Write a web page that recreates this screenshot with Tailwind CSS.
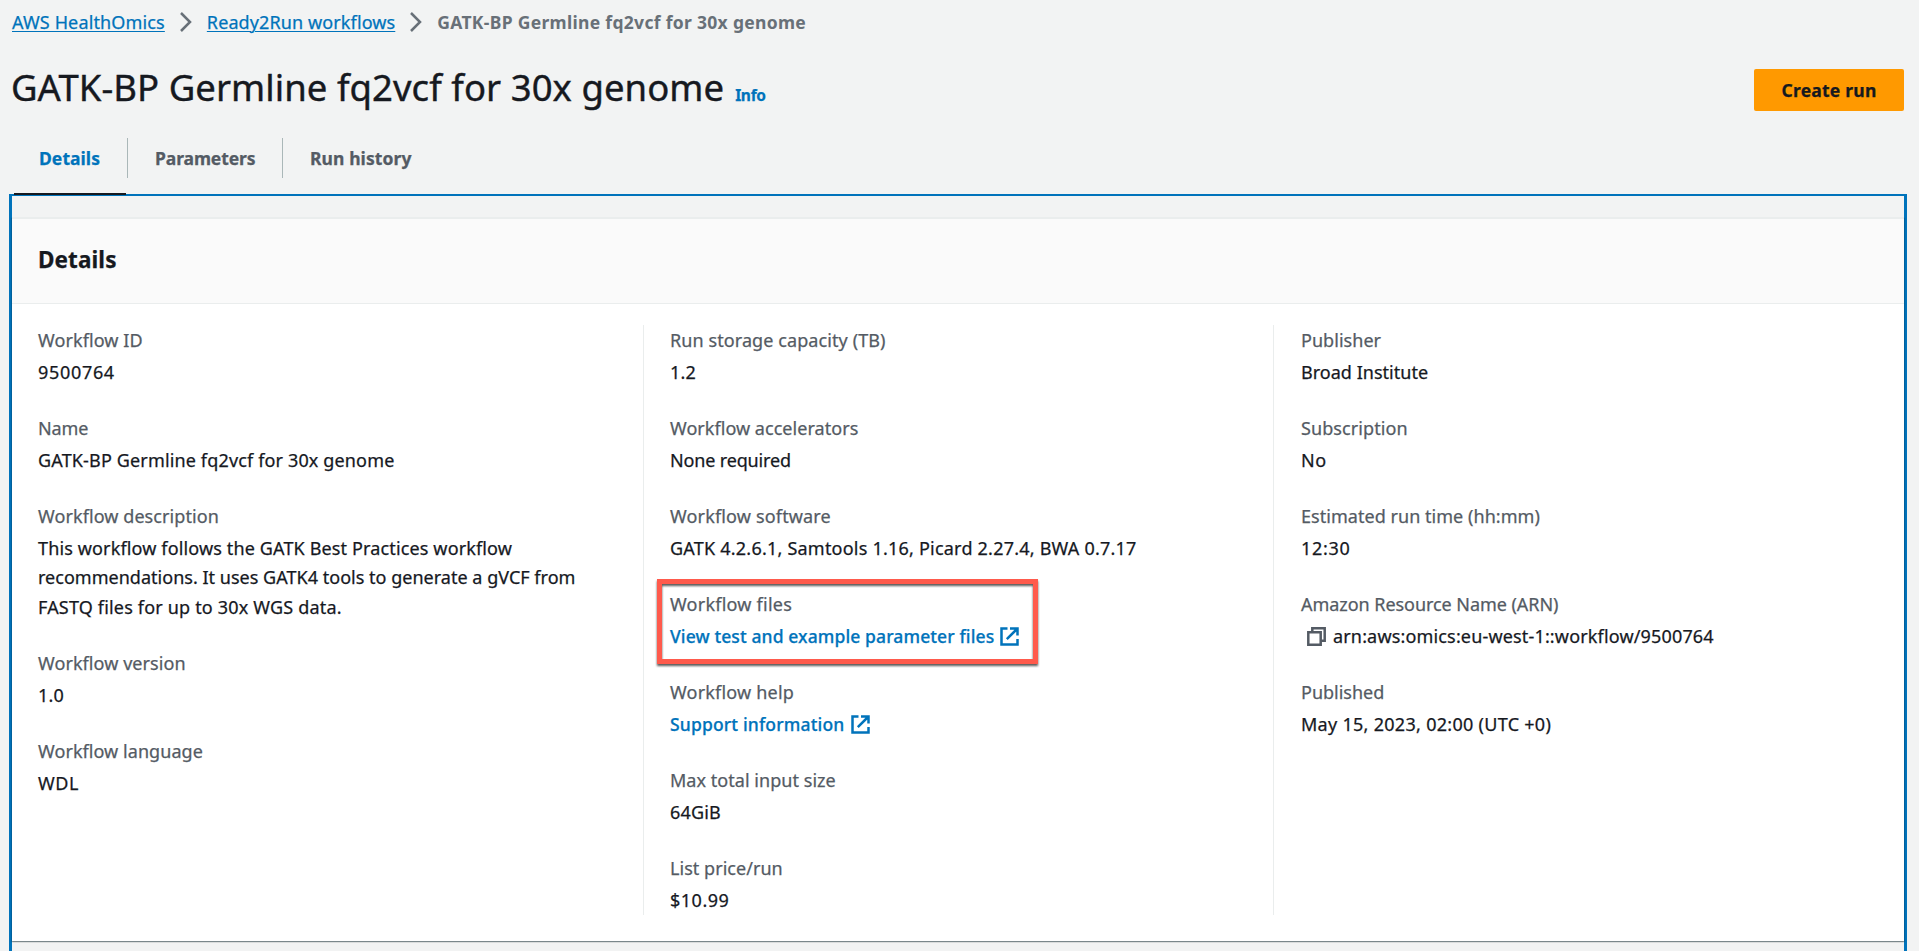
<!DOCTYPE html>
<html lang="en">
<head>
<meta charset="utf-8">
<title>AWS HealthOmics</title>
<script src="https://cdn.jsdelivr.net/npm/@tailwindcss/browser@4"></script>
</head>
<body class="flex h-[951px] flex-col overflow-hidden bg-[#f2f3f3] font-['Noto_Sans','Open_Sans',sans-serif] text-[18px] text-[#16191f] [-webkit-text-stroke:0.25px]">
<svg class="hidden">
  <symbol id="external" viewBox="0 0 19 19"><path d="M7.5 1.5H1.5V17.5H17.5V12M10 1.5H17.5V8.5M17 2L6.8 12.2" fill="none" stroke="currentColor" stroke-width="2.5"/></symbol>
  <symbol id="chevron" viewBox="0 0 12 20"><path d="M1 1L10 10L1 19" fill="none" stroke="currentColor" stroke-width="2.5"/></symbol>
</svg>

<nav class="mt-2 flex h-7 items-center pl-3 leading-7 whitespace-nowrap">
  <a class="text-[#0073bb] underline decoration-1 underline-offset-2 tracking-[0.14px]">AWS HealthOmics</a>
  <svg class="ml-[15px] mr-[15px] h-5 w-3 text-[#687078]"><use href="#chevron"/></svg>
  <a class="text-[#0073bb] underline decoration-1 underline-offset-2 tracking-[0.11px]">Ready2Run workflows</a>
  <svg class="ml-[15px] mr-[15px] h-5 w-3 text-[#687078]"><use href="#chevron"/></svg>
  <span class="text-[17.5px] font-bold tracking-[0.31px] text-[#687078] [-webkit-text-stroke:0px]">GATK-BP Germline fq2vcf for 30x genome</span>
</nav>

<header class="mt-[26px] flex h-[76px] items-start justify-between pr-[15px] pl-[11px]">
  <div class="flex items-baseline gap-[11px] pt-px">
    <h1 class="text-[36.5px] leading-[48px] tracking-[0.05px] [-webkit-text-stroke:0.4px]">GATK-BP Germline fq2vcf for 30x genome</h1>
    <a class="text-[15.5px] font-bold tracking-[-0.3px] text-[#0073bb]">Info</a>
  </div>
  <button class="mt-[7px] h-[42px] w-[150px] rounded-xs bg-[#ff9900] text-[17.5px] font-bold tracking-[0.22px]">Create run</button>
</header>

<div class="flex h-14 pl-[14px] text-[17.5px] leading-10 font-bold text-[#545b64]">
  <div class="relative w-[113px] pl-[25px] tracking-[0.06px] text-[#0073bb]">Details<span class="absolute -bottom-px left-0 h-[2px] w-[112px] bg-[#16191f]"></span></div>
  <div class="h-10 w-[155px] border-l border-[#aab7b8] pl-[27px] tracking-[-0.1px]">Parameters</div>
  <div class="h-10 border-l border-[#aab7b8] pl-[27px] tracking-[0.09px]">Run history</div>
</div>

<main class="mr-3 ml-[9px] flex-1 border-x-3 border-t-2 border-[#0073bb] pt-[21px]">
  <section class="h-[724px] border-t-2 border-[#eaeded] bg-white shadow-[0_1px_1px_0_rgba(0,28,36,0.3),1px_1px_1px_0_rgba(0,28,36,0.15),-1px_1px_1px_0_rgba(0,28,36,0.15)]">
    <h2 class="h-[85px] border-b border-[#eaeded] bg-[#fafafa] pl-[26px] text-[22.5px] leading-[81px] font-bold tracking-[0.1px]">Details</h2>
    <div class="mt-[21px] flex h-[590px] leading-[29.33px] whitespace-nowrap">
      <dl class="flex w-[631px] flex-col gap-[26.67px] pt-px pl-[26px]">
        <div class="flex flex-col gap-[2.67px]"><dt class="tracking-[0.09px] text-[#545b64]">Workflow ID</dt><dd class="tracking-[0.68px]">9500764</dd></div>
        <div class="flex flex-col gap-[2.67px]"><dt class="tracking-[-0.09px] text-[#545b64]">Name</dt><dd class="tracking-[0.15px]">GATK-BP Germline fq2vcf for 30x genome</dd></div>
        <div class="flex flex-col gap-[2.67px]"><dt class="tracking-[0.08px] text-[#545b64]">Workflow description</dt><dd><span class="tracking-[0.14px]">This workflow follows the GATK Best Practices workflow</span><br><span class="tracking-[0.02px]">recommendations. It uses GATK4 tools to generate a gVCF from</span><br><span class="tracking-[0.18px]">FASTQ files for up to 30x WGS data.</span></dd></div>
        <div class="flex flex-col gap-[2.67px]"><dt class="tracking-[0.07px] text-[#545b64]">Workflow version</dt><dd class="tracking-[0.19px]">1.0</dd></div>
        <div class="flex flex-col gap-[2.67px]"><dt class="tracking-[0.06px] text-[#545b64]">Workflow language</dt><dd class="tracking-[0.57px]">WDL</dd></div>
      </dl>
      <dl class="flex w-[630px] flex-col gap-[26.67px] border-l border-[#eaeded] pt-px pl-[26px]">
        <div class="flex flex-col gap-[2.67px]"><dt class="tracking-[0.09px] text-[#545b64]">Run storage capacity (TB)</dt><dd class="tracking-[0.19px]">1.2</dd></div>
        <div class="flex flex-col gap-[2.67px]"><dt class="tracking-[0.04px] text-[#545b64]">Workflow accelerators</dt><dd class="tracking-[-0.15px]">None required</dd></div>
        <div class="flex flex-col gap-[2.67px]"><dt class="tracking-[0.16px] text-[#545b64]">Workflow software</dt><dd class="tracking-[0.22px]">GATK 4.2.6.1, Samtools 1.16, Picard 2.27.4, BWA 0.7.17</dd></div>
        <div class="relative flex flex-col gap-[2.67px]">
          <dt class="tracking-[0.23px] text-[#545b64]">Workflow files</dt>
          <dd class="flex items-center gap-[6px] text-[17.5px] font-medium tracking-[0.11px] text-[#0073bb]">View test and example parameter files<svg class="h-[19px] w-[19px]"><use href="#external"/></svg></dd>
          <span class="absolute -top-[11px] -left-[13px] h-[85px] w-[381px] border-5 border-[#ff5a4c] drop-shadow-[0_2px_1px_rgba(0,0,0,0.65)]"></span>
        </div>
        <div class="flex flex-col gap-[2.67px]"><dt class="tracking-[0.19px] text-[#545b64]">Workflow help</dt><dd class="flex items-center gap-[7px] text-[17.5px] font-medium tracking-[0.16px] text-[#0073bb]">Support information<svg class="h-[19px] w-[19px]"><use href="#external"/></svg></dd></div>
        <div class="flex flex-col gap-[2.67px]"><dt class="tracking-[0.04px] text-[#545b64]">Max total input size</dt><dd class="tracking-[0.19px]">64GiB</dd></div>
        <div class="flex flex-col gap-[2.67px]"><dt class="tracking-[0.04px] text-[#545b64]">List price/run</dt><dd class="tracking-[0.5px]">$10.99</dd></div>
      </dl>
      <dl class="flex flex-1 flex-col gap-[26.67px] border-l border-[#eaeded] pt-px pl-[27px]">
        <div class="flex flex-col gap-[2.67px]"><dt class="tracking-[0.04px] text-[#545b64]">Publisher</dt><dd class="tracking-[0.02px]">Broad Institute</dd></div>
        <div class="flex flex-col gap-[2.67px]"><dt class="tracking-[0.08px] text-[#545b64]">Subscription</dt><dd class="tracking-[0.47px]">No</dd></div>
        <div class="flex flex-col gap-[2.67px]"><dt class="tracking-[0.04px] text-[#545b64]">Estimated run time (hh:mm)</dt><dd class="tracking-[0.7px]">12:30</dd></div>
        <div class="flex flex-col gap-[2.67px]"><dt class="tracking-[-0.05px] text-[#545b64]">Amazon Resource Name (ARN)</dt><dd class="flex items-center gap-[7px] pl-[6px] tracking-[0.16px]"><svg class="h-[19px] w-[19px] text-[#545b64]" viewBox="0 0 19 19" fill="none" stroke="currentColor" stroke-width="2.5"><path d="M1.3 5.3H13.7V17.7H1.3ZM5.3 5V1.3H17.7V13.7H14"/></svg>arn:aws:omics:eu-west-1::workflow/9500764</dd></div>
        <div class="flex flex-col gap-[2.67px]"><dt class="text-[#545b64]">Published</dt><dd class="tracking-[0.29px]">May 15, 2023, 02:00 (UTC +0)</dd></div>
      </dl>
    </div>
  </section>
</main>
</body>
</html>
